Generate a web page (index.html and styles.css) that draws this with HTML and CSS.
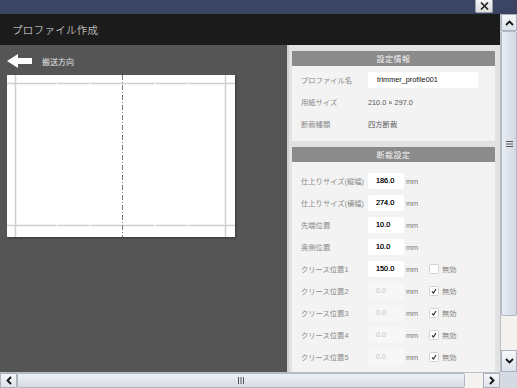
FILE: index.html
```html
<!DOCTYPE html>
<html lang="ja">
<head>
  <meta charset="UTF-8">
  <title>プロファイル作成</title>
  <link rel="stylesheet" href="styles.css">
</head>
<body>
  <div class="window">
    <div class="topbar">
      <button class="close" type="button">
        <svg width="9" height="8" viewBox="0 0 9 8"><path d="M1 0.5L8 7.5M8 0.5L1 7.5" stroke="#222" stroke-width="1.6"/></svg>
      </button>
    </div>

    <div class="frame">
      <div class="viewport">
        <div class="titlebar">プロファイル作成</div>
        <div class="main">
          <div class="preview">
            <div class="direction">
              <svg width="25" height="14" viewBox="0 0 25 14"><path d="M0 7L11 0V4H25V10H11V14Z" fill="#fff"/></svg>
              <span>搬送方向</span>
            </div>
            <svg class="paper" width="228" height="162" viewBox="0 0 228 162">
              <rect width="228" height="162" fill="#fff"/>
              <g stroke="#cfcfcf" stroke-width="1.5">
                <line x1="8.5" y1="0" x2="8.5" y2="162"/>
                <line x1="218.5" y1="0" x2="218.5" y2="162"/>
                <line x1="0" y1="8.5" x2="228" y2="8.5"/>
                <line x1="0" y1="150.5" x2="228" y2="150.5"/>
              </g>
              <g stroke="#fff" stroke-width="1">
                <line x1="50" y1="7" x2="50" y2="10"/>
                <line x1="83" y1="7" x2="83" y2="10"/>
                <line x1="148" y1="7" x2="148" y2="10"/>
                <line x1="181" y1="7" x2="181" y2="10"/>
                <line x1="50" y1="149" x2="50" y2="152"/>
                <line x1="83" y1="149" x2="83" y2="152"/>
                <line x1="148" y1="149" x2="148" y2="152"/>
                <line x1="181" y1="149" x2="181" y2="152"/>
              </g>
              <line x1="115.5" y1="0" x2="115.5" y2="162" stroke="#7a7a7a" stroke-width="1" stroke-dasharray="5 2 1 2"/>
            </svg>
          </div>

          <div class="panel">
            <section class="group">
              <h2>設定情報</h2>
              <div class="rows first">
                <div class="row">
                  <span class="label">プロファイル名</span>
                  <span class="field wide">trimmer_profile001</span>
                </div>
                <div class="row">
                  <span class="label">用紙サイズ</span>
                  <span class="value">210.0 × 297.0</span>
                </div>
                <div class="row">
                  <span class="label">断裁種類</span>
                  <span class="value">四方断裁</span>
                </div>
              </div>
            </section>

            <section class="group">
              <h2>断裁設定</h2>
              <div class="rows">
                <div class="row">
                  <span class="label">仕上りサイズ(縦幅)</span>
                  <span class="field">186.0</span><span class="unit">mm</span>
                </div>
                <div class="row">
                  <span class="label">仕上りサイズ(横幅)</span>
                  <span class="field">274.0</span><span class="unit">mm</span>
                </div>
                <div class="row">
                  <span class="label">先端位置</span>
                  <span class="field">10.0</span><span class="unit">mm</span>
                </div>
                <div class="row">
                  <span class="label">奥側位置</span>
                  <span class="field">10.0</span><span class="unit">mm</span>
                </div>
                <div class="row">
                  <span class="label">クリース位置1</span>
                  <span class="field">150.0</span><span class="unit">mm</span>
                  <span class="check"><span class="box"></span>無効</span>
                </div>
                <div class="row">
                  <span class="label">クリース位置2</span>
                  <span class="field off">0.0</span><span class="unit">mm</span>
                  <span class="check"><span class="box"><svg width="6" height="6" viewBox="0 0 6 6"><path d="M1 3.5L2.5 5L5 1" stroke="#333" stroke-width="1.2" fill="none"/></svg></span>無効</span>
                </div>
                <div class="row">
                  <span class="label">クリース位置3</span>
                  <span class="field off">0.0</span><span class="unit">mm</span>
                  <span class="check"><span class="box"><svg width="6" height="6" viewBox="0 0 6 6"><path d="M1 3.5L2.5 5L5 1" stroke="#333" stroke-width="1.2" fill="none"/></svg></span>無効</span>
                </div>
                <div class="row">
                  <span class="label">クリース位置4</span>
                  <span class="field off">0.0</span><span class="unit">mm</span>
                  <span class="check"><span class="box"><svg width="6" height="6" viewBox="0 0 6 6"><path d="M1 3.5L2.5 5L5 1" stroke="#333" stroke-width="1.2" fill="none"/></svg></span>無効</span>
                </div>
                <div class="row">
                  <span class="label">クリース位置5</span>
                  <span class="field off">0.0</span><span class="unit">mm</span>
                  <span class="check"><span class="box"><svg width="6" height="6" viewBox="0 0 6 6"><path d="M1 3.5L2.5 5L5 1" stroke="#333" stroke-width="1.2" fill="none"/></svg></span>無効</span>
                </div>
              </div>
            </section>
          </div>
        </div>
      </div>

      <!-- vertical scrollbar -->
      <div class="vscroll">
        <div class="sbtn">
          <svg width="9" height="6" viewBox="0 0 9 6"><path d="M1 5L4.5 1.5L8 5" stroke="#111" stroke-width="1.8" fill="none"/></svg>
        </div>
        <div class="vthumb">
          <svg width="7" height="6" viewBox="0 0 7 6"><path d="M0 0.5H7M0 3H7M0 5.5H7" stroke="#555" stroke-width="1"/></svg>
        </div>
        <div class="vtrack"></div>
        <div class="sbtn down">
          <svg width="9" height="6" viewBox="0 0 9 6"><path d="M1 1L4.5 4.5L8 1" stroke="#111" stroke-width="1.8" fill="none"/></svg>
        </div>
      </div>

      <!-- horizontal scrollbar -->
      <div class="hscroll">
        <div class="sbtn">
          <svg width="6" height="9" viewBox="0 0 6 9"><path d="M5 1L1.5 4.5L5 8" stroke="#111" stroke-width="1.8" fill="none"/></svg>
        </div>
        <div class="hthumb">
          <svg width="6" height="7" viewBox="0 0 6 7"><path d="M0.5 0V7M3 0V7M5.5 0V7" stroke="#555" stroke-width="1"/></svg>
        </div>
        <div class="htrack"></div>
        <div class="sbtn">
          <svg width="6" height="9" viewBox="0 0 6 9"><path d="M1 1L4.5 4.5L1 8" stroke="#111" stroke-width="1.8" fill="none"/></svg>
        </div>
      </div>
      <div class="corner"></div>
    </div>
  </div>
</body>
</html>
```

FILE: styles.css
```css
body {
  margin: 0;
  font-family: "Liberation Sans", "Noto Sans CJK JP", sans-serif;
  background-color: #3b4563;
}
.window {
  width: 517px;
  height: 388px;
  display: flex;
  flex-direction: column;
  overflow: hidden;
}
.topbar {
  height: 14px;
  background-color: #3b4563;
  display: flex;
  justify-content: flex-end;
  padding-right: 24px;
}
.close {
  width: 18px;
  height: 13px;
  padding: 0;
  border: 1px solid #9aa0a8;
  border-top: none;
  border-radius: 0 0 2px 2px;
  background: linear-gradient(#f4f4f4, #dcdcdc);
  display: flex;
  align-items: center;
  justify-content: center;
}
.frame {
  display: grid;
  grid-template-columns: 500px 17px;
  grid-template-rows: 358px 16px;
}
.viewport {
  display: flex;
  flex-direction: column;
  overflow: hidden;
}
.titlebar {
  height: 31px;
  background-color: #1b1b1b;
  color: #ececec;
  font-size: 10.5px;
  letter-spacing: 0.3px;
  line-height: 31px;
  padding-left: 12px;
  font-family: "Noto Sans CJK JP", sans-serif;
  font-weight: 300;
}
.main {
  flex: 1;
  display: flex;
  min-height: 0;
}

/* left: preview */
.preview {
  width: 287px;
  background-color: #555555;
  padding: 9px 0 0 7px;
  box-sizing: border-box;
}
.direction {
  display: flex;
  align-items: center;
  gap: 10px;
  height: 14px;
}
.direction span {
  color: #e6e6e6;
  font-size: 8px;
  font-family: "Noto Sans CJK JP", sans-serif;
}
.paper {
  display: block;
  margin-top: 7px;
  box-shadow: 1px 1px 2px rgba(0,0,0,0.35);
}

/* right: settings panel */
.panel {
  width: 213px;
  background-color: #e2e2e2;
  border-left: 2px solid #cfcfcf;
  box-sizing: border-box;
  padding: 6px 5px 0 3px;
  overflow: hidden;
}
.group {
  margin-bottom: 6px;
}
.group h2 {
  margin: 0;
  height: 15px;
  line-height: 15px;
  background-color: #8b8b8b;
  color: #f4f4f4;
  font-size: 8px;
  font-weight: normal;
  text-align: center;
  letter-spacing: 0.5px;
  font-family: "Noto Sans CJK JP", sans-serif;
}
.rows {
  background-color: #f3f3f3;
  padding: 8px 9px 6px;
}
.rows.first {
  padding-top: 3px;
}
.row {
  height: 22px;
  display: flex;
  align-items: center;
  font-size: 7.3px;
}
.label {
  width: 67px;
  color: #8a8a8a;
  flex-shrink: 0;
}
.value {
  color: #555;
}
.field {
  width: 36px;
  height: 16px;
  line-height: 16px;
  background-color: #fff;
  border-radius: 2px;
  box-sizing: border-box;
  padding-left: 8px;
  color: #111;
  font-size: 7.3px;
  text-shadow: 0 0 0.4px #111;
}
.field.wide {
  width: 110px;
  padding-left: 9px;
  text-shadow: none;
}
.field.off {
  background-color: #f7f7f7;
  color: #c4c4c4;
  text-shadow: none;
}
.unit {
  width: 25px;
  padding-left: 2px;
  box-sizing: border-box;
  color: #777;
}
.check {
  display: flex;
  align-items: center;
  gap: 3px;
  color: #888;
}
.box {
  width: 8px;
  height: 8px;
  background-color: #fff;
  border: 1px solid #d2d2d2;
  border-radius: 1.5px;
  display: flex;
  align-items: center;
  justify-content: center;
}

/* scrollbars */
.vscroll {
  grid-row: 1;
  grid-column: 2;
  display: flex;
  flex-direction: column;
  background-color: #f4f2ee;
  border-left: 1px solid #b9bec6;
}
.sbtn {
  width: 16px;
  height: 16px;
  flex-shrink: 0;
  display: flex;
  align-items: center;
  justify-content: center;
  background: linear-gradient(#f6f7f9, #dde2ea);
  border: 1px solid #aab1bc;
  box-sizing: border-box;
}
.vscroll .sbtn {
  height: 17px;
}
.vscroll .sbtn.down {
  height: 22px;
}
.vthumb {
  flex: 1;
  display: flex;
  align-items: center;
  justify-content: center;
  background: linear-gradient(to right, #e9edf3, #d2d9e4);
  border: 1px solid #b0b8c4;
  border-radius: 2px;
  padding-bottom: 60px;
}
.vtrack {
  height: 34px;
}
.hscroll {
  grid-row: 2;
  grid-column: 1;
  display: flex;
  background-color: #f4f2ee;
  border-top: 1px solid #b9bec6;
}
.hscroll .sbtn {
  width: 17px;
  height: 15px;
}
.hthumb {
  width: 448px;
  display: flex;
  align-items: center;
  justify-content: center;
  background: linear-gradient(#eef1f5, #d6dce6);
  border: 1px solid #b0b8c4;
  border-radius: 2px;
  box-sizing: border-box;
}
.htrack {
  flex: 1;
}
.corner {
  grid-row: 2;
  grid-column: 2;
  background-color: #d5dae2;
}
```
